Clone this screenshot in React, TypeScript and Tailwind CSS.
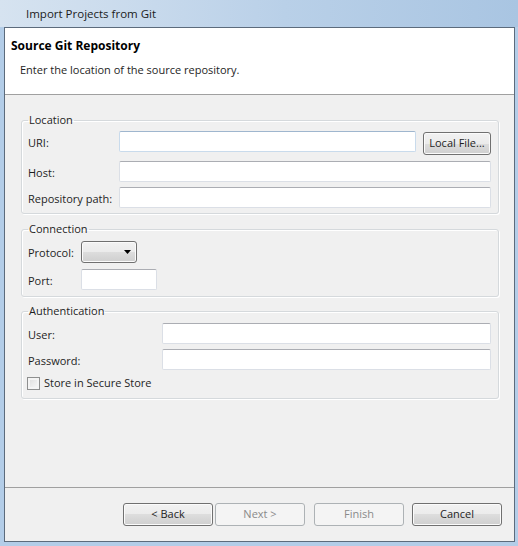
import React from 'react';

const inputCls =
  'h-[21px] bg-white border border-[#dbdfe6] border-t-[#abadb3] rounded-[2px]';
const btnCls =
  'h-[23px] w-[90px] rounded-[3px] border border-[#707070] bg-[linear-gradient(#f2f2f2_0%,#ebebeb_50%,#dddddd_50%,#cfcfcf_100%)] shadow-[inset_0_0_0_1px_#fbfbfb] text-[#1e1e1e] flex items-center justify-center';
const btnOff =
  'h-[23px] w-[90px] rounded-[3px] border border-[#adb2b5] bg-[#f4f4f4] text-[#8a8a8a] flex items-center justify-center';
const groupCls =
  'border border-[#d5d9dc] rounded-[3px] shadow-[inset_1px_1px_0_#fff,1px_1px_0_#fff] pl-[6px] pr-[7px] m-0 min-w-0';
const labelCls = 'flex items-center pt-[3px]';

function Legend({ children }: { children: React.ReactNode }) {
  return <legend className="px-[1px] leading-[16px]">{children}</legend>;
}

export default function App() {
  return (
    <div className="w-[518px] h-[546px] bg-[#b3cde8] flex flex-col font-['Open_Sans',sans-serif] text-[11px] text-[#1e1e1e]">
      {/* title bar */}
      <div className="h-[27px] shrink-0 flex items-center pl-[26px] bg-[linear-gradient(90deg,#d6e3f0_0%,#c7d9ec_30%,#b9d0e8_55%,#a9c5e2_100%)] text-[11.5px] text-[#1b1b1b]">
        Import Projects from Git
      </div>

      <div className="ml-[4px] mr-[3px] mb-[4px] flex-1 flex flex-col border border-[#5c6b7c] bg-[#f0f0f0]">
        {/* header */}
        <div className="h-[67px] shrink-0 bg-white border-b border-[#a0a0a0] pt-[10px]">
          <div className="pl-[6px] font-bold text-[12px] leading-[16px] text-black">Source Git Repository</div>
          <div className="pl-[15px] mt-[8px] leading-[16px]">Enter the location of the source repository.</div>
        </div>

        {/* body */}
        <div className="flex-1 pl-[16px] pr-[15px] pt-[17px]">
          <fieldset className={groupCls + ' pb-[5px]'}>
            <Legend>Location</Legend>
            <div className="mt-[3px] flex flex-col">
              <div className="flex h-[24px]">
                <span className={labelCls + ' w-[91px] h-[21px]'}>URI:</span>
                <div className="flex-1 h-[21px] bg-white border border-[#c9dbec] border-t-[#9fb6ce] rounded-[2px]" />
                <button className="h-[23px] w-[68px] ml-[7px] mt-[1px] rounded-[3px] border border-[#707070] bg-[linear-gradient(#f2f2f2_0%,#ebebeb_50%,#dddddd_50%,#cfcfcf_100%)] shadow-[inset_0_0_0_1px_#fbfbfb] text-[#1e1e1e] flex items-center justify-center">
                  Local File...
                </button>
              </div>
              <div className="flex mt-[6px]">
                <span className={labelCls + ' w-[91px]'}>Host:</span>
                <div className={inputCls + ' flex-1'} />
              </div>
              <div className="flex mt-[5px]">
                <span className={labelCls + ' w-[91px]'}>Repository path:</span>
                <div className={inputCls + ' flex-1'} />
              </div>
            </div>
          </fieldset>

          <fieldset className={groupCls + ' mt-[7px] pb-[6px]'}>
            <Legend>Connection</Legend>
            <div className="mt-[4px] flex flex-col">
              <div className="flex h-[22px]">
                <span className={labelCls + ' w-[53px]'}>Protocol:</span>
                <div className="w-[56px] h-[22px] rounded-[3px] border border-[#707070] bg-[linear-gradient(#f2f2f2_0%,#ebebeb_50%,#dddddd_50%,#cfcfcf_100%)] shadow-[inset_0_0_0_1px_#fbfbfb] flex items-center justify-end pr-[5px]">
                  <svg width="7" height="4" viewBox="0 0 7 4">
                    <path d="M0 0h7L3.5 4z" fill="#000" />
                  </svg>
                </div>
              </div>
              <div className="flex mt-[6px]">
                <span className={labelCls + ' w-[53px]'}>Port:</span>
                <div className={inputCls + ' w-[76px]'} />
              </div>
            </div>
          </fieldset>

          <fieldset className={groupCls + ' mt-[6px] pb-[8px]'}>
            <Legend>Authentication</Legend>
            <div className="mt-[4px] flex flex-col">
              <div className="flex">
                <span className={labelCls + ' w-[134px]'}>User:</span>
                <div className={inputCls + ' flex-1'} />
              </div>
              <div className="flex mt-[5px]">
                <span className={labelCls + ' w-[134px]'}>Password:</span>
                <div className={inputCls + ' flex-1'} />
              </div>
              <div className="flex items-center mt-[7px] h-[13px]">
                <span className="-ml-[1px] w-[13px] h-[13px] border border-[#8e8f8f] bg-[linear-gradient(135deg,#dcdcdc,#fafafa)] shadow-[inset_0_0_0_2px_#f4f4f4]" />
                <span className="ml-[4px]">Store in Secure Store</span>
              </div>
            </div>
          </fieldset>
        </div>

        {/* footer */}
        <div className="h-[54px] shrink-0 border-t border-[#a0a0a0] pt-[15px] pr-[12px] flex justify-end items-start">
          <button className={btnCls}>&lt; Back</button>
          <button className={btnOff + ' ml-[2px]'}>Next &gt;</button>
          <button className={btnOff + ' ml-[9px]'}>Finish</button>
          <button className={btnCls + ' ml-[8px]'}>Cancel</button>
        </div>
      </div>
    </div>
  );
}
